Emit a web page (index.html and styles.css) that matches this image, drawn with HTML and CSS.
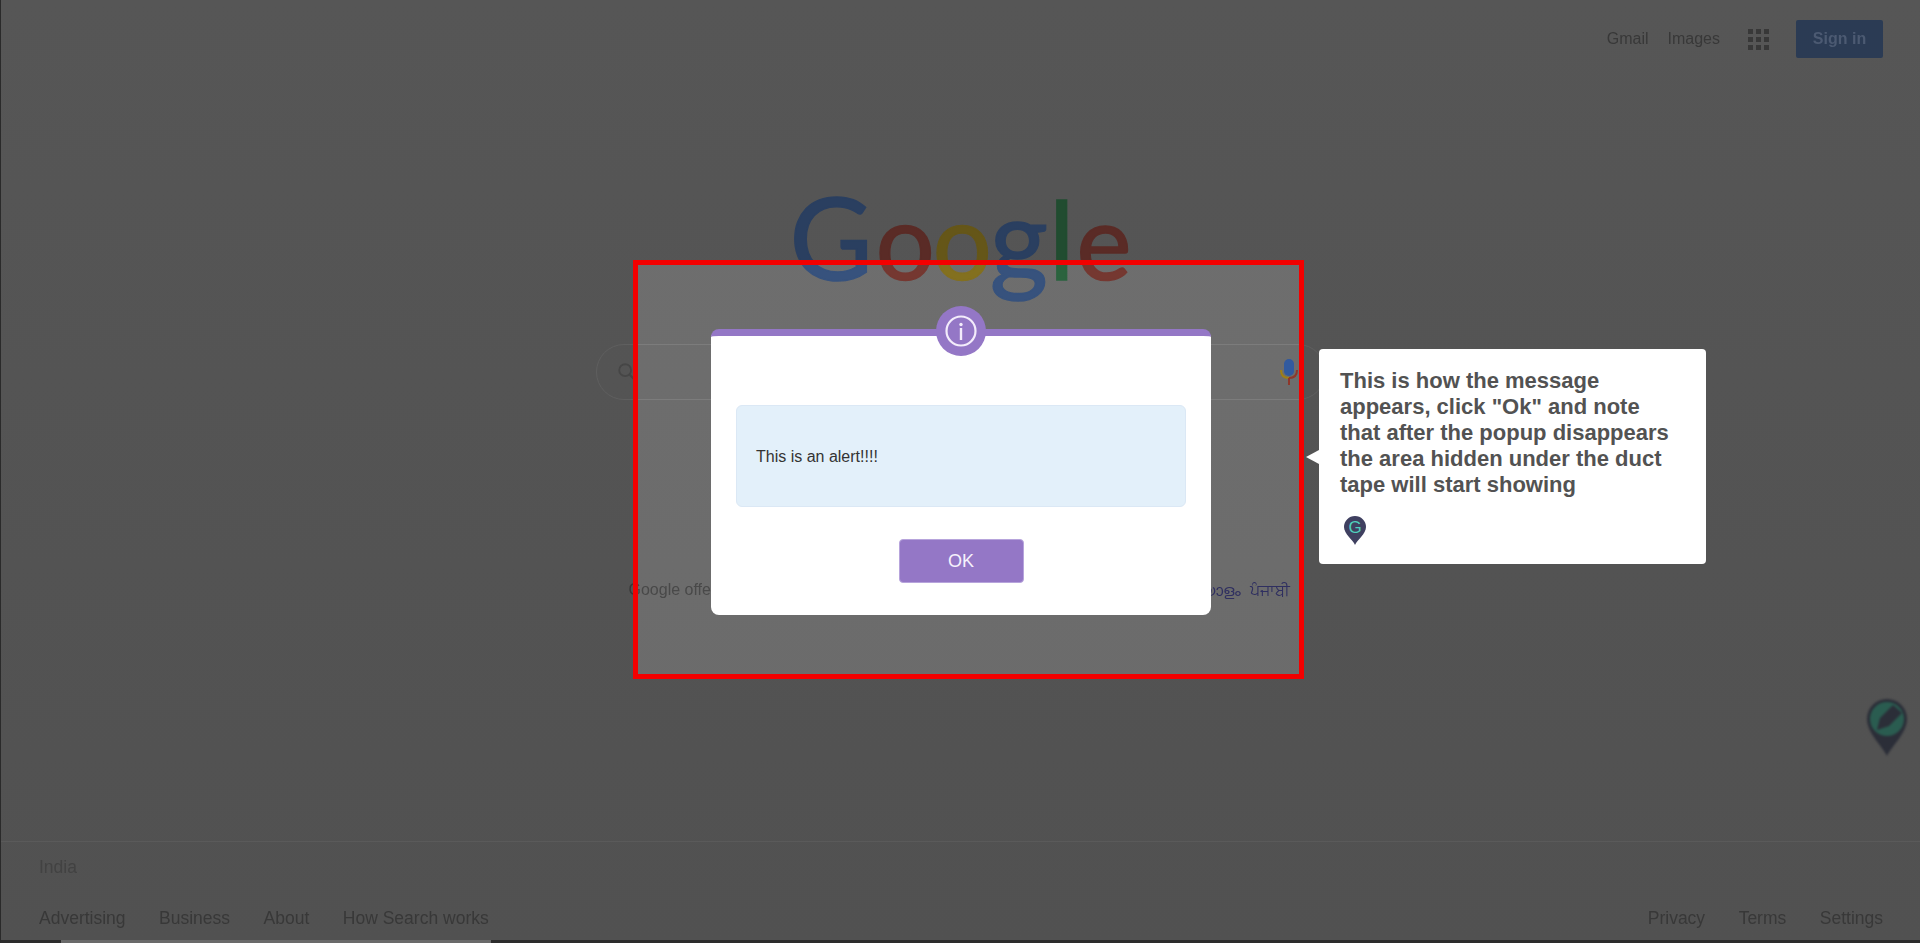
FILE: index.html
```html
<!DOCTYPE html>
<html lang="en">
<head>
<meta charset="utf-8">
<title>Google</title>
<link rel="stylesheet" href="styles.css">
</head>
<body>
<div class="page">
  <header class="top">
    <span class="top-link gmail">Gmail</span>
    <span class="top-link">Images</span>
    <div class="apps"><i></i><i></i><i></i><i></i><i></i><i></i><i></i><i></i><i></i></div>
    <span class="signin">Sign in</span>
  </header>
  <main class="main">
    <div class="logo"><span class="b g1">G</span><span class="r o1">o</span><span class="y o2">o</span><span class="b g2">g</span><span class="gr l1">l</span><span class="r e1">e</span></div>
    <div class="search">
      <svg class="mag" viewBox="0 0 24 24" width="22" height="22"><circle cx="10" cy="10" r="6.5" fill="none" stroke="#464646" stroke-width="2"/><path d="M15 15l6 6" stroke="#464646" stroke-width="2.4"/></svg>
      <svg class="mic" viewBox="0 0 18 26" width="18" height="26"><rect x="4" y="0" width="10" height="17" rx="5" fill="#26457a"/><path d="M1 11c0 5 3 8 8 8" fill="none" stroke="#7a6210" stroke-width="2"/><path d="M17 11c0 5-3 8-8 8" fill="none" stroke="#6e2a20" stroke-width="2"/><rect x="8" y="19" width="2" height="7" fill="#6e2a20"/></svg>
    </div>
    <div class="offer">
      <span>Google offered in:</span>
      <span class="langs"><span>മലയാളം</span><span>ਪੰਜਾਬੀ</span></span>
    </div>
  </main>
  <footer class="foot">
    <div class="country">India</div>
    <div class="foot-row">
      <div class="foot-links"><span>Advertising</span><span>Business</span><span>About</span><span>How Search works</span></div>
      <div class="foot-links right"><span>Privacy</span><span>Terms</span><span>Settings</span></div>
    </div>
    <div class="strip"><div class="thumb"></div></div>
  </footer>
</div>

<svg class="fab" viewBox="0 0 40 57" width="40" height="57">
  <path d="M20 57C16 48 0 34 0 20a20 20 0 0 1 40 0c0 14-16 28-20 37z" fill="#2b2e38"/>
  <circle cx="20" cy="20" r="17" fill="#2a5c50"/>
  <path d="M10 31l3-12L26 6l9 8-13 13z" fill="#2b2e38"/>
</svg>

<div class="spot"></div>

<section class="dialog">
  <div class="badge">
    <svg viewBox="0 0 32 32" width="32" height="32"><circle cx="16" cy="16" r="14.5" fill="none" stroke="#f3ecfb" stroke-width="2.2"/><circle cx="16" cy="9.5" r="1.7" fill="#f3ecfb"/><rect x="14.8" y="13" width="2.4" height="12" fill="#f3ecfb"/></svg>
  </div>
  <div class="alert"><span class="alert-text">This is an alert!!!!</span></div>
  <button class="ok">OK</button>
</section>

<aside class="tip">
  <p>This is how the message appears, click "Ok" and note that after the popup disappears the area hidden under the duct tape will start showing</p>
  <svg class="tip-pin" viewBox="0 0 22 29" width="22" height="29"><path d="M11 29C9 24 0 18 0 11a11 11 0 0 1 22 0c0 7-9 13-11 18z" fill="#3f4060"/><text x="11" y="17" text-anchor="middle" class="tip-g">G</text></svg>
</aside>
</body>
</html>
```
FILE: styles.css
```css
html, body { margin: 0; height: 943px; overflow: hidden; }
body { background: #555; font-family: "Liberation Sans", Arial, sans-serif; color: #383838; }

.page { height: 943px; display: flex; flex-direction: column; border-left: 1px solid #2a2a2a; box-sizing: border-box; filter: blur(0.5px); background: linear-gradient(#565656, #515151); }

.top { display: flex; align-items: center; justify-content: flex-end; padding: 20px 37px 0 0; height: 38px; flex: none; }
.top-link { font-size: 16px; margin-right: 19px; color: #383838; }
.apps { display: grid; grid-template-columns: repeat(3, 5px); grid-auto-rows: 5px; gap: 3px; margin: 0 27px 0 9px; }
.apps i { background: #383838; }
.signin { width: 87px; height: 38px; line-height: 38px; text-align: center; background: #2b3b54; color: #4c5a72; font-weight: 700; font-size: 16px; border-radius: 2px; }

.main { flex: 1; display: flex; flex-direction: column; align-items: center; }
.logo { display: flex; align-items: baseline; font-family: "Lato", sans-serif; font-size: 104px; line-height: 122px; height: 122px; margin-top: 117px; -webkit-text-stroke: 1.6px; }
.b { color: #2a3f60; } .r { color: #5a2b26; } .y { color: #655618; } .gr { color: #214c30; }
.g1 { font-size: 114px; margin-right: 3px; }
.o1, .o2 { margin-right: -2px; }
.g2 { font-size: 112px; margin-right: 1px; }
.l1 { font-size: 108px; margin-right: 2px; }

.search { width: 730px; height: 56px; box-sizing: border-box; margin-top: 47px; border: 1px solid #5f5f5f; border-radius: 28px; display: flex; align-items: center; justify-content: space-between; padding: 0 26px 0 19px; }
.mic { margin-right: 1px; }

.offer { width: 664px; box-sizing: border-box; padding-right: 3px; display: flex; justify-content: space-between; font-size: 16px; line-height: 20px; margin-top: 180px; }
.langs { display: flex; gap: 9px; color: #24244a; font-family: "Noto Sans", "DejaVu Sans", sans-serif; }

.foot { flex: none; height: 102px; border-top: 1px solid #5a5a5a; display: flex; flex-direction: column; font-size: 17.5px; box-sizing: border-box; color: #383838; }
.country { padding: 15px 0 0 38px; line-height: 21px; color: #424242; }
.foot-row { display: flex; justify-content: space-between; padding: 30px 37px 0 38px; line-height: 21px; }
.foot-links { display: flex; gap: 33.5px; }
.strip { margin-top: auto; height: 3px; background: #2c2c2c; padding-left: 60px; }
.thumb { width: 430px; height: 3px; background: #6a6a6a; }

.fab { position: absolute; left: 1867px; top: 699px; filter: blur(0.8px); }

.spot { position: absolute; left: 633px; top: 260px; width: 671px; height: 419px; box-sizing: border-box; border: 5px solid #f30000; backdrop-filter: brightness(1.3); }

.dialog { position: absolute; left: 711px; top: 329px; width: 500px; height: 286px; box-sizing: border-box; background: #fff; border-top: 7px solid #9477c6; border-radius: 8px; padding: 69px 25px 0; display: flex; flex-direction: column; align-items: center; }
.badge { position: absolute; left: 225px; top: -30px; width: 50px; height: 50px; border-radius: 50%; background: #9477c6; display: flex; align-items: center; justify-content: center; }
.alert { width: 450px; height: 102px; box-sizing: border-box; background: #e3f0fa; border: 1px solid #dbe8f5; border-radius: 6px; display: flex; align-items: center; padding: 2px 0 0 19px; color: #333; font-size: 16px; }
.ok { width: 125px; height: 44px; margin-top: 32px; border: 1px solid #b7a4dc; border-radius: 4px; background: #9477c6; color: #f6f1fc; font: 18px "Liberation Sans", Arial, sans-serif; padding: 0; }

.tip { position: absolute; left: 1319px; top: 349px; width: 387px; height: 215px; box-sizing: border-box; background: #fff; border-radius: 4px; padding: 19px 21px 0; color: #525252; }
.tip::before { content: ""; position: absolute; left: -13px; top: 101px; border: 7px solid transparent; border-left-width: 0; border-right: 13px solid #fff; }
.tip p { margin: 0; font-weight: 700; font-size: 22px; line-height: 26px; }
.tip-pin { display: block; margin: 18px 0 0 4px; }
.tip-g { fill: #4fd0bc; font: 400 17px "Liberation Sans", Arial, sans-serif; }
```
